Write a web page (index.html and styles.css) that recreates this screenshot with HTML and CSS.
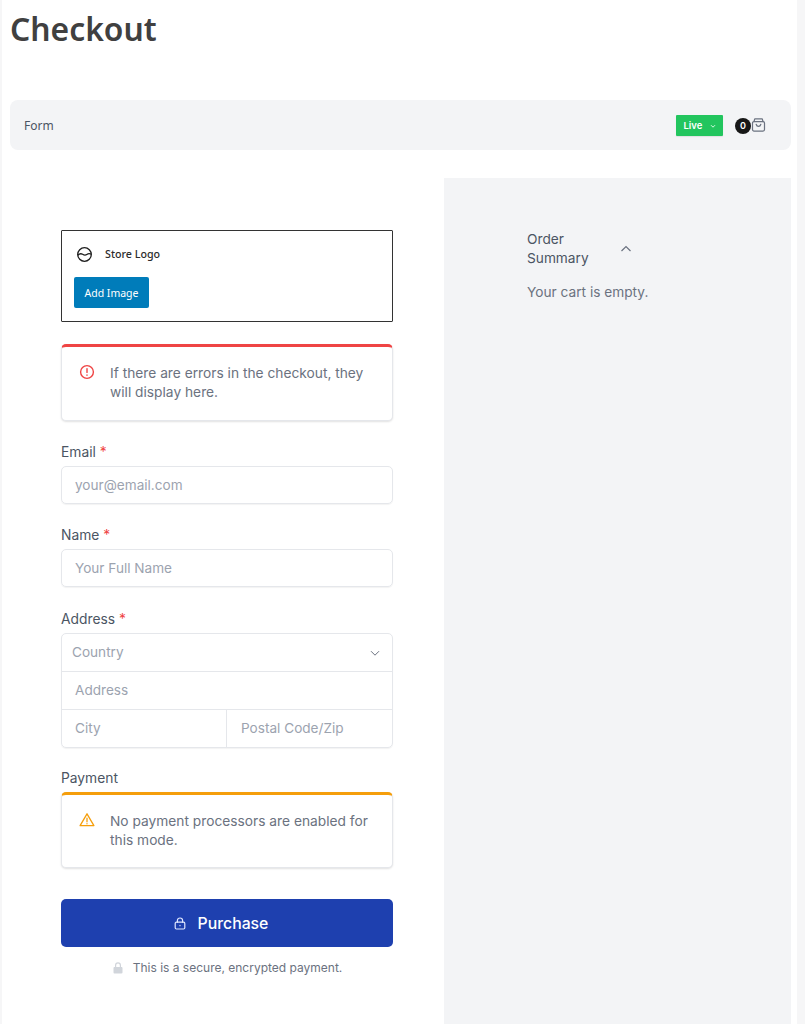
FILE: index.html
```html
<!DOCTYPE html>
<html lang="en">
<head>
<meta charset="utf-8">
<title>Checkout</title>
<link rel="stylesheet" href="styles.css">
</head>
<body>
<div class="page">
  <h1 class="title">Checkout</h1>
  <div class="bar">
    <span class="bar-label">Form</span>
    <div class="bar-right">
      <div class="live">
        <span>Live</span>
        <svg class="live-chev" viewBox="0 0 10 10" fill="none" stroke="currentColor" stroke-width="1.2"><path d="M2.5 4l2.5 2.5L7.5 4"/></svg>
      </div>
      <div class="cart">
        <span class="cart-count">0</span>
        <svg class="cart-icon" viewBox="0 0 16 16" fill="none" stroke="#6b7280" stroke-width="1.3" stroke-linecap="round" stroke-linejoin="round"><path d="M3.2 4.3 4 1.4h8l.8 2.9"/><rect x="1.6" y="4.3" width="12.8" height="10.2" rx="1.6"/><path d="M5.5 7.2c.4 1.6 1.4 2.3 2.5 2.3s2.1-.7 2.5-2.3"/></svg>
      </div>
    </div>
  </div>
  <div class="columns">
    <main class="form-col">
      <div class="logo-box">
        <div class="logo-head">
          <svg class="logo-icon" viewBox="0 0 18 18" fill="none" stroke="#1e1e1e" stroke-width="1.4"><circle cx="9" cy="9" r="7.2"/><path d="M2 9.8c1.800-2 3.400-2 5-1s3 1.200 4.400.2 3-1.200 4.600-.4"/></svg>
          <span>Store Logo</span>
        </div>
        <button class="add-image" type="button">Add Image</button>
      </div>

      <div class="notice notice-error">
        <svg class="notice-icon" viewBox="0 0 16 16" fill="none" stroke="#ef4444" stroke-width="1.4" stroke-linecap="round"><circle cx="8" cy="8" r="6.4"/><path d="M8 4.600v3.800M8 11v.2"/></svg>
        <p>If there are errors in the checkout, they will display here.</p>
      </div>

      <div class="field field-email">
        <label class="label">Email <span class="req">*</span></label>
        <div class="input">your@email.com</div>
      </div>
      <div class="field field-name">
        <label class="label">Name <span class="req">*</span></label>
        <div class="input">Your Full Name</div>
      </div>
      <div class="field field-address">
        <label class="label">Address <span class="req">*</span></label>
        <div class="address">
          <div class="addr-row addr-country">
            <span>Country</span>
            <svg class="addr-chev" viewBox="0 0 12 12" fill="none" stroke="#6b7280" stroke-width="1"><path d="M2 4.200l4 4 4-4"/></svg>
          </div>
          <div class="addr-row">Address</div>
          <div class="addr-split">
            <div class="addr-cell addr-city">City</div>
            <div class="addr-cell addr-zip">Postal Code/Zip</div>
          </div>
        </div>
      </div>
      <div class="field field-payment">
        <label class="label">Payment</label>
        <div class="notice notice-warn">
          <svg class="notice-icon" viewBox="0 0 16 16" fill="none" stroke="#f59e0b" stroke-width="1.3" stroke-linecap="round" stroke-linejoin="round"><path d="M8 1.800 1.100 13.600h13.800z"/><path d="M8 6.200v3.600M8 11.700v.1"/></svg>
          <p>No payment processors are enabled for this mode.</p>
        </div>
      </div>

      <button class="purchase" type="button">
        <svg class="purchase-lock" viewBox="0 0 12 13" fill="none" stroke="#e0e7ff" stroke-width="1.2" stroke-linecap="round"><rect x="1.200" y="5.200" width="9.600" height="6.800" rx="1.200"/><path d="M3.400 5.200V3.600a2.600 2.600 0 0 1 5.200 0v1.600M6 8.400v.3"/></svg>
        <span>Purchase</span>
      </button>
      <div class="secure">
        <svg class="secure-lock" viewBox="0 0 10 12"><path fill="#d1d5db" d="M2 5V3.200a3 3 0 0 1 6 0V5h.6c.5 0 .9.4.9.9v4.700c0 .5-.4.9-.9.9H1.400a.9.9 0 0 1-.9-.9V5.900c0-.5.4-.9.9-.9zM3.200 5h3.600V3.200a1.800 1.800 0 0 0-3.600 0z"/></svg>
        <span>This is a secure, encrypted payment.</span>
      </div>
    </main>
    <aside class="summary-col">
      <div class="summary">
        <div class="summary-head">
          <span class="summary-title">Order Summary</span>
          <svg class="summary-chev" viewBox="0 0 12 12" fill="none" stroke="#6b7280" stroke-width="1.2"><path d="M1.500 8l4.500-4.500L10.500 8"/></svg>
        </div>
        <p class="empty">Your cart is empty.</p>
      </div>
    </aside>
  </div>
</div>
</body>
</html>
```

FILE: styles.css
```css
* { box-sizing: border-box; }
html, body { margin: 0; height: 100%; }
body {
  background: #f6f6f7;
  padding: 0 8px 0 2px;
  font-family: Inter, sans-serif;
  overflow: hidden;
}
.page {
  background: #fff;
  height: 1024px;
  padding: 0 6px 0 8px;
}
.title {
  margin: 0;
  height: 100px;
  padding-top: 7px;
  font: 600 31.800px/44px "Noto Sans", sans-serif;
  color: #404040;
}
.bar {
  height: 50px;
  background: #f3f4f6;
  border-radius: 8px;
  display: flex;
  align-items: center;
  justify-content: space-between;
  padding: 1px 25px 0 14px;
}
.bar-label {
  font: 400 12px/16px "Noto Sans", sans-serif;
  color: #4b5563;
  padding-top: 1px;
}
.bar-right { display: flex; align-items: center; }
.live {
  width: 47px;
  height: 21.500px;
  background: #22c55e;
  border-radius: 1px;
  color: #fff;
  display: flex;
  align-items: center;
  padding-left: 7.500px;
  font: 600 9.500px/12px Inter, sans-serif;
  box-shadow: 0 1px 1px rgba(0,0,0,.08);
}
.live-chev { width: 8px; height: 8px; margin-left: 7px; color: #dcfce7; }
.cart { display: flex; align-items: center; margin-left: 12px; }
.cart-count {
  width: 16px;
  height: 16px;
  border-radius: 50%;
  background: #171717;
  color: #fff;
  font: 600 9px/16px Inter, sans-serif;
  text-align: center;
}
.cart-icon { width: 15px; height: 16px; display: block; margin-top: -2px; }

.columns { display: flex; margin-top: 28px; }
.form-col { width: 434px; padding: 52px 51px 0 51px; }
.summary-col { flex: 1; height: 846px; background: #f3f4f6; padding: 52px 83px; }

.logo-box {
  height: 92px;
  border: 1px solid #333;
  border-radius: 1px;
  padding: 11px 12px 0;
}
.logo-head {
  display: flex;
  align-items: center;
  height: 24px;
  padding-left: 2px;
  font: 500 10.700px/14px "Noto Sans", sans-serif;
  color: #2b2b2b;
}
.logo-icon { width: 17px; height: 17px; margin-right: 12px; }
.add-image {
  display: block;
  width: 75px;
  height: 31px;
  margin-top: 11px;
  padding: 0;
  border: 0;
  border-radius: 2px;
  background: #007cba;
  color: #fff;
  font: 400 10.500px/14px "Noto Sans", sans-serif;
}

.notice {
  display: flex;
  align-items: flex-start;
  background: #fff;
  border-radius: 5px;
  border: 1px solid #e5e7eb;
  border-top-width: 3px;
  box-shadow: 0 1px 2px rgba(0,0,0,.12);
  padding: 17px 20px 16px 17px;
}
.notice p {
  margin: 0;
  font: 400 13.750px/19px Inter, sans-serif;
  color: #6b7280;
}
.notice-icon { flex: none; width: 16px; height: 16px; margin-right: 15px; }
.notice-error { margin-top: 22px; height: 77px; border-top-color: #ef4444; }
.notice-warn { height: 76px; border-top-color: #f59e0b; margin-top: 4px; }

.label {
  display: block;
  font: 420 13.800px/19px Inter, sans-serif;
  color: #4b5563;
}
.req { color: #ef4444; }
.field-email { margin-top: 22px; }
.field-name { margin-top: 22px; }
.field-address { margin-top: 23px; }
.field-payment { margin-top: 21px; }
.input {
  height: 38px;
  margin-top: 4px;
  border: 1px solid #e5e7eb;
  border-radius: 5px;
  box-shadow: 0 1px 1px rgba(0,0,0,.05);
  padding: 0 13px;
  display: flex;
  align-items: center;
  font: 400 13.600px/19px Inter, sans-serif;
  color: #9ca3af;
}
.address {
  margin-top: 4px;
  border: 1px solid #e5e7eb;
  border-radius: 5px;
  box-shadow: 0 1px 1px rgba(0,0,0,.05);
  font: 400 13.600px/19px Inter, sans-serif;
  color: #9ca3af;
}
.addr-row {
  height: 38px;
  padding: 0 13px;
  display: flex;
  align-items: center;
  border-bottom: 1px solid #e5e7eb;
}
.addr-country { justify-content: space-between; padding: 0 11px 0 10px; }
.addr-chev { width: 12px; height: 12px; }
.addr-split { display: flex; height: 37px; }
.addr-cell { padding: 0 13px; display: flex; align-items: center; }
.addr-city { width: 164px; }
.addr-zip { flex: 1; border-left: 1px solid #e5e7eb; padding-left: 14px; }

.purchase {
  display: flex;
  align-items: center;
  justify-content: center;
  width: 100%;
  height: 48px;
  margin-top: 31px;
  border: 0;
  border-radius: 5px;
  background: #1e40af;
  color: #fff;
  font: 500 15.800px/22px Inter, sans-serif;
  padding: 1px 12px 0 0;
}
.purchase-lock { width: 12px; height: 13px; margin-right: 12px; }
.secure {
  display: flex;
  align-items: center;
  justify-content: center;
  margin-top: 12px;
  padding-left: 1px;
  font: 400 12px/17px Inter, sans-serif;
  color: #6b7280;
}
.secure-lock { width: 10px; height: 12px; margin-right: 10px; }

.summary-head { display: flex; align-items: center; font: 420 13.700px/19px Inter, sans-serif; color: #4b5563; }
.summary-title { width: 93px; }
.summary-chev { width: 12px; height: 12px; }
.empty { margin: 15px 0 0; font: 400 13.700px/19px Inter, sans-serif; color: #6b7280; }
```
